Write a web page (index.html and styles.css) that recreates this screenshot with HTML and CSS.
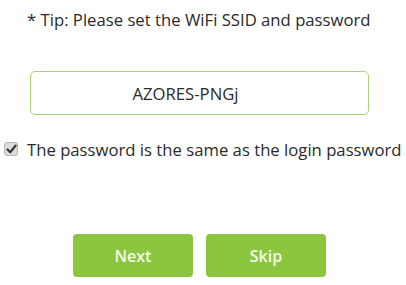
FILE: index.html
```html
<!DOCTYPE html>
<html lang="en">
<head>
  <meta charset="UTF-8">
  <meta name="viewport" content="width=device-width, initial-scale=1.0">
  <title>WiFi Setup</title>
  <link rel="stylesheet" href="styles.css">
</head>
<body>
  <div class="wizard">
    <p class="tip">* Tip: Please set the WiFi SSID and password</p>

    <div class="ssid-row">
      <input class="ssid-input" type="text" value="AZORES-PNGj">
    </div>

    <label class="same-pwd">
      <span class="check-box">
        <svg width="11" height="10" viewBox="0 0 11 10">
          <path d="M1.5 5.5 L4.2 8.2 L9.6 1.6" fill="none" stroke="#333" stroke-width="2.2" stroke-linecap="round" stroke-linejoin="round"/>
        </svg>
      </span>
      The password is the same as the login password
    </label>

    <div class="btn-row">
      <button class="green-btn">Next</button>
      <button class="green-btn">Skip</button>
    </div>
  </div>
</body>
</html>
```

FILE: styles.css
```css
body {
  margin: 0;
  background-color: #fff;
  font-family: "Open Sans", "Noto Sans", Arial, sans-serif;
  color: #2a2a2a;
}
.wizard {
  width: 406px;
  height: 285px;
}
.tip {
  margin: 0;
  padding: 9px 0 0 27px;
  font-size: 16.7px;
  line-height: 22px;
}
.ssid-row {
  padding: 40px 0 0 30px;
}
.ssid-input {
  box-sizing: border-box;
  width: 339px;
  height: 44px;
  border: 1px solid #a9d476;
  border-radius: 5px;
  padding: 0 28px 0 0;
  text-align: center;
  font-family: inherit;
  font-size: 16.7px;
  color: #2a2a2a;
  outline: none;
}
.same-pwd {
  display: flex;
  align-items: center;
  gap: 9px;
  margin-top: 24px;
  padding-left: 4px;
  font-size: 16.7px;
  line-height: 22px;
}
.check-box {
  box-sizing: border-box;
  display: flex;
  align-items: center;
  justify-content: center;
  width: 14px;
  height: 14px;
  border: 1px solid #b5b5b5;
  border-radius: 3px;
  background-color: #dcdcdc;
  margin-top: -3px;
}
.btn-row {
  display: flex;
  gap: 13px;
  padding: 73px 0 0 73px;
}
.green-btn {
  width: 120px;
  height: 43px;
  border: none;
  border-radius: 4px;
  background-color: #8cc63f;
  color: #f4fbe9;
  font-family: inherit;
  font-size: 16px;
  font-weight: 600;
  cursor: pointer;
}
.green-btn:hover {
  background-color: #7db533;
}
```
